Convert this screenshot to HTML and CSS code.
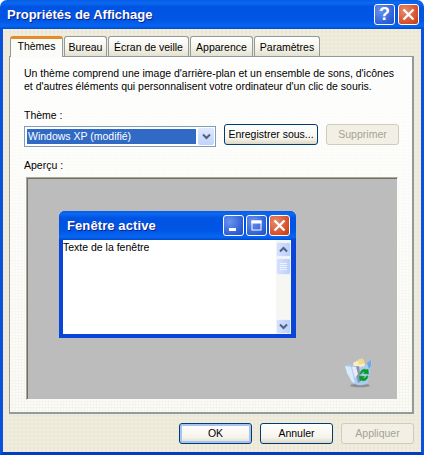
FILE: index.html
```html
<!DOCTYPE html>
<html lang="fr">
<head>
    <meta charset="UTF-8">
    <meta name="viewport" content="width=device-width, initial-scale=1.0">
    <title>Propriétés de Affichage</title>
    <link rel="stylesheet" href="styles.css">
</head>
<body>

<div class="window">
    <div class="titlebar">
        <span class="title">Propriétés de Affichage</span>
        <div class="caption-btns">
            <span class="cap-btn cap-help">?</span>
            <span class="cap-btn cap-close">
                <svg width="13" height="13" viewBox="0 0 13 13"><path d="M1.5 1.5l10 10M11.5 1.5l-10 10" stroke="#fff" stroke-width="2.4" fill="none"/></svg>
            </span>
        </div>
    </div>

    <div class="dialog">
        <div class="tabs">
            <span class="tab active">Thèmes</span>
            <span class="tab tab-bureau">Bureau</span>
            <span class="tab tab-ecran">Écran de veille</span>
            <span class="tab tab-apparence">Apparence</span>
            <span class="tab tab-params">Paramètres</span>
        </div>

        <div class="panel">
            <p class="intro">Un thème comprend une image d'arrière-plan et un ensemble de sons, d'icônes<br>et d'autres éléments qui personnalisent votre ordinateur d'un clic de souris.</p>

            <div class="field-label">Thème :</div>
            <div class="theme-row">
                <div class="combo">
                    <span class="combo-value">Windows XP (modifié)</span>
                    <span class="combo-arrow">
                        <svg width="9" height="7" viewBox="0 0 9 7"><path d="M1 1.5l3.5 3.5 3.5-3.5" stroke="#4d6185" stroke-width="2" fill="none"/></svg>
                    </span>
                </div>
                <button class="btn btn-save">Enregistrer sous...</button>
                <button class="btn btn-delete" disabled>Supprimer</button>
            </div>

            <div class="field-label preview-label">Aperçu :</div>
            <div class="preview">
                <div class="mini-window">
                    <div class="mini-title">
                        <span class="mini-title-text">Fenêtre active</span>
                        <div class="mini-btns">
                            <span class="cap-btn cap-blue">
                                <svg width="13" height="13" viewBox="0 0 13 13"><rect x="2" y="9" width="7" height="3" fill="#fff"/></svg>
                            </span>
                            <span class="cap-btn cap-blue">
                                <svg width="13" height="13" viewBox="0 0 13 13"><rect x="2" y="2" width="9" height="9" fill="none" stroke="#fff"/><rect x="1.500" y="1.500" width="10" height="3" fill="#fff"/></svg>
                            </span>
                            <span class="cap-btn cap-close">
                                <svg width="13" height="13" viewBox="0 0 13 13"><path d="M1.500 1.500l10 10M11.500 1.500l-10 10" stroke="#fff" stroke-width="2.400" fill="none"/></svg>
                            </span>
                        </div>
                    </div>
                    <div class="mini-client">
                        <div class="mini-text">Texte de la fenêtre</div>
                        <div class="scrollbar">
                            <span class="sb-btn">
                                <svg width="9" height="7" viewBox="0 0 9 7"><path d="M1 5.500l3.500-3.500 3.500 3.500" stroke="#4d6185" stroke-width="2" fill="none"/></svg>
                            </span>
                            <span class="sb-thumb">
                                <svg width="7" height="8" viewBox="0 0 7 8"><path d="M0 .5h7M0 2.500h7M0 4.500h7M0 6.500h7" stroke="#eef3ff" fill="none"/></svg>
                            </span>
                            <span class="sb-track"></span>
                            <span class="sb-btn">
                                <svg width="9" height="7" viewBox="0 0 9 7"><path d="M1 1.500l3.500 3.500 3.500-3.500" stroke="#4d6185" stroke-width="2" fill="none"/></svg>
                            </span>
                        </div>
                    </div>
                </div>

                <svg class="bin" width="30" height="31" viewBox="0 0 30 31">
                    <ellipse cx="16" cy="28.500" rx="10" ry="1.800" fill="#8f8f8f"/>
                    <path d="M9 6l8-4 3 3 2 6-12 1z" fill="#f6efc4"/>
                    <path d="M14 2.500l5-1 2 5-6 1z" fill="#f3d98a"/>
                    <path d="M1 9c3-1.500 6-1.500 9 0l6 1c4 0 8-3 11-7 1 2 1 4 0 6l-3 16c-1 2-3 3-6 3-3 .5-6 0-8-2L3 16z" fill="#a9cdf2"/>
                    <path d="M1 9l6 1 4 16-3-1-5-9z" fill="#d8ebfc"/>
                    <path d="M10 10l5-1 2 15-3 2z" fill="#8b93b5"/>
                    <path d="M8 10l4 0 2 7-3 4z" fill="#eceaf4"/>
                    <path d="M23 6l4-3v6l-2 3z" fill="#6ea6e6"/>
                    <path d="M16 17c.5-4 4-6 7-4l1-1 .5 5-5-.5 1.500-1.500c-1.500-.5-3 .2-3.500 2z" fill="#0d9a26" stroke="#0d9a26" stroke-width=".6"/>
                    <path d="M24 19c-.5 4-4 6-7 4l-1 1-.5-5 5 .5-1.500 1.500c1.500.5 3-.2 3.500-2z" fill="#0d9a26" stroke="#0d9a26" stroke-width=".6"/>
                </svg>
            </div>
        </div>

        <div class="actions">
            <button class="btn btn-default">OK</button>
            <button class="btn">Annuler</button>
            <button class="btn" disabled>Appliquer</button>
        </div>
    </div>
</div>

</body>
</html>
```

FILE: styles.css
```css
* {
    box-sizing: border-box;
}
html, body {
    margin: 0;
    padding: 0;
    background: #fff;
}
body {
    font-family: "Liberation Sans", Arial, sans-serif;
    font-size: 10.5px;
    line-height: 13px;
    color: #000;
}
.window {
    width: 424px;
    height: 455px;
    overflow: hidden;
    border-radius: 7px 7px 0 0;
}

/* title bar */
.titlebar {
    height: 29px;
    display: flex;
    align-items: center;
    justify-content: space-between;
    padding: 0 5px 1px 7px;
    background: linear-gradient(#0a5be4 0, #0a6af0 3px, #0053e3 7px, #0056e5 20px, #0667f2 26px, #0049cf 29px);
}
.title {
    font-size: 13px;
    font-weight: bold;
    color: #fff;
    text-shadow: 1px 1px 0 #0f1e89;
}
.caption-btns {
    display: flex;
    gap: 3px;
}
.cap-btn {
    width: 21px;
    height: 21px;
    display: flex;
    align-items: center;
    justify-content: center;
    border: 1px solid #fff;
    border-radius: 3px;
    color: #fff;
    flex: none;
}
.cap-help {
    font-size: 18px;
    font-weight: bold;
    background: radial-gradient(circle at 30% 30%, #6b93ec, #2e5fd8 70%, #2450c0);
}
.cap-close {
    background: radial-gradient(circle at 30% 30%, #e78a6c, #d8512c 65%, #c23a14);
}
.cap-blue {
    background: radial-gradient(circle at 30% 30%, #6b93ec, #2e5fd8 70%, #2450c0);
}

/* dialog body */
.dialog {
    height: 426px;
    padding: 7px 7px 0 6px;
    border: 3px solid #0852dd;
    border-top: 0;
    border-bottom-color: #0040c0;
    background-color: #ece9d8;
    background-image: radial-gradient(circle at 1px 1px, rgba(255,255,255,.4) .6px, transparent .9px);
    background-size: 4px 4px;
}
.tabs {
    display: flex;
    height: 20px;
    padding-left: 1px;
    gap: 1px;
    align-items: flex-end;
}
.tab {
    height: 20px;
    display: flex;
    align-items: center;
    justify-content: center;
    padding-top: 1px;
    border: 1px solid #919b9c;
    border-bottom: 0;
    border-radius: 3px 3px 0 0;
    background: linear-gradient(#fff, #f4f2e8 60%, #e4e1d2);
}
.tab.active {
    position: relative;
    z-index: 1;
    width: 53px;
    height: 21px;
    margin-bottom: -1px;
    padding: 0 0 4px;
    border-top: 3px solid #e68b2c;
    background: #fbfbf8;
}
.tab-bureau { width: 43px; }
.tab-ecran { width: 81px; }
.tab-apparence { width: 63px; }
.tab-params { width: 66px; }

.panel {
    height: 358px;
    padding: 10px 14px 0 14px;
    border: 1px solid #919b9c;
    border-right-width: 2px;
    border-bottom-width: 2px;
    background-color: #f8f7f2;
    background-image: radial-gradient(circle at 1px 1px, #fff .6px, transparent .9px), linear-gradient(#fdfdfc, #f5f4ec);
    background-size: 3px 3px, 100% 100%;
}
.intro {
    margin: 0 0 16px;
    white-space: nowrap;
}
.field-label {
    height: 13px;
    margin-bottom: 2px;
}
.theme-row {
    display: flex;
    align-items: flex-start;
}
.combo {
    width: 192px;
    height: 21px;
    margin-top: 2px;
    padding: 2px;
    display: flex;
    justify-content: space-between;
    border: 1px solid #7f9db9;
    background: #fff;
    flex: none;
}
.combo-value {
    width: 169px;
    height: 15px;
    padding-left: 1px;
    line-height: 15px;
    background: #316ac5;
    color: #fff;
}
.combo-arrow {
    width: 16px;
    height: 17px;
    margin: -1px -1px 0 0;
    display: flex;
    align-items: center;
    justify-content: center;
    border-radius: 2px;
    background: linear-gradient(#dfe8fd, #c1d3fb);
}
.btn {
    width: 73px;
    height: 21px;
    padding: 0;
    font: inherit;
    color: #000;
    border: 1px solid #003c74;
    border-radius: 3px;
    background: linear-gradient(#fff, #f5f4ec 70%, #dcd8c8);
    flex: none;
}
.btn:disabled {
    color: #a5a294;
    border-color: #cfccbd;
    background: #f2f0e5;
}
.btn-save {
    width: 94px;
    margin-left: 8px;
}
.btn-delete {
    margin-left: 8px;
}
.btn-default {
    box-shadow: inset 0 0 0 2px #a9c3f0;
}
.preview-label {
    margin-top: 12px;
    margin-bottom: 5px;
}

/* preview canvas */
.preview {
    position: relative;
    width: 372px;
    height: 223px;
    margin-left: 2px;
    padding: 33px 0 0 32px;
    border: 1px solid;
    border-color: #aca899 #fbfaf4 #fbfaf4 #aca899;
    box-shadow: inset 1px 1px 0 #716f64;
    background: #bcbcbc;
}
.mini-window {
    width: 237px;
    height: 127px;
    display: flex;
    flex-direction: column;
    border-radius: 6px 6px 0 0;
    border: solid #0845d8;
    border-width: 0 5px 4px 4px;
    background: #0845d8;
}
.mini-title {
    height: 29px;
    display: flex;
    align-items: center;
    justify-content: space-between;
    margin: 0 -5px 0 -4px;
    padding: 0 6px 1px 8px;
    border-radius: 6px 6px 0 0;
    background: linear-gradient(#0a5be4 0, #0a6af0 3px, #0053e3 7px, #0056e5 20px, #0667f2 26px, #0049cf 29px);
}
.mini-title-text {
    font-size: 13px;
    font-weight: bold;
    letter-spacing: .1px;
    color: #fff;
    text-shadow: 1px 1px 0 #0f1e89;
}
.mini-btns {
    display: flex;
    gap: 2px;
}
.mini-client {
    flex: 1;
    display: flex;
    justify-content: space-between;
    background: #fff;
}
.mini-text {
    padding-top: 1px;
}
.scrollbar {
    width: 15px;
    display: flex;
    flex-direction: column;
    padding-top: 2px;
    background: #f6f6f2;
}
.sb-btn, .sb-thumb {
    display: flex;
    align-items: center;
    justify-content: center;
    border: 1px solid #eef2fd;
    border-radius: 2px;
    background: linear-gradient(90deg, #d6e2fc, #bccffa);
}
.sb-btn {
    height: 15px;
    flex: none;
}
.sb-thumb {
    height: 17px;
    margin-top: 1px;
    flex: none;
}
.sb-track {
    flex: 1;
}
.bin {
    position: absolute;
    left: 317px;
    top: 179px;
}

.actions {
    display: flex;
    justify-content: flex-end;
    gap: 8px;
    margin-top: 9px;
}
```
